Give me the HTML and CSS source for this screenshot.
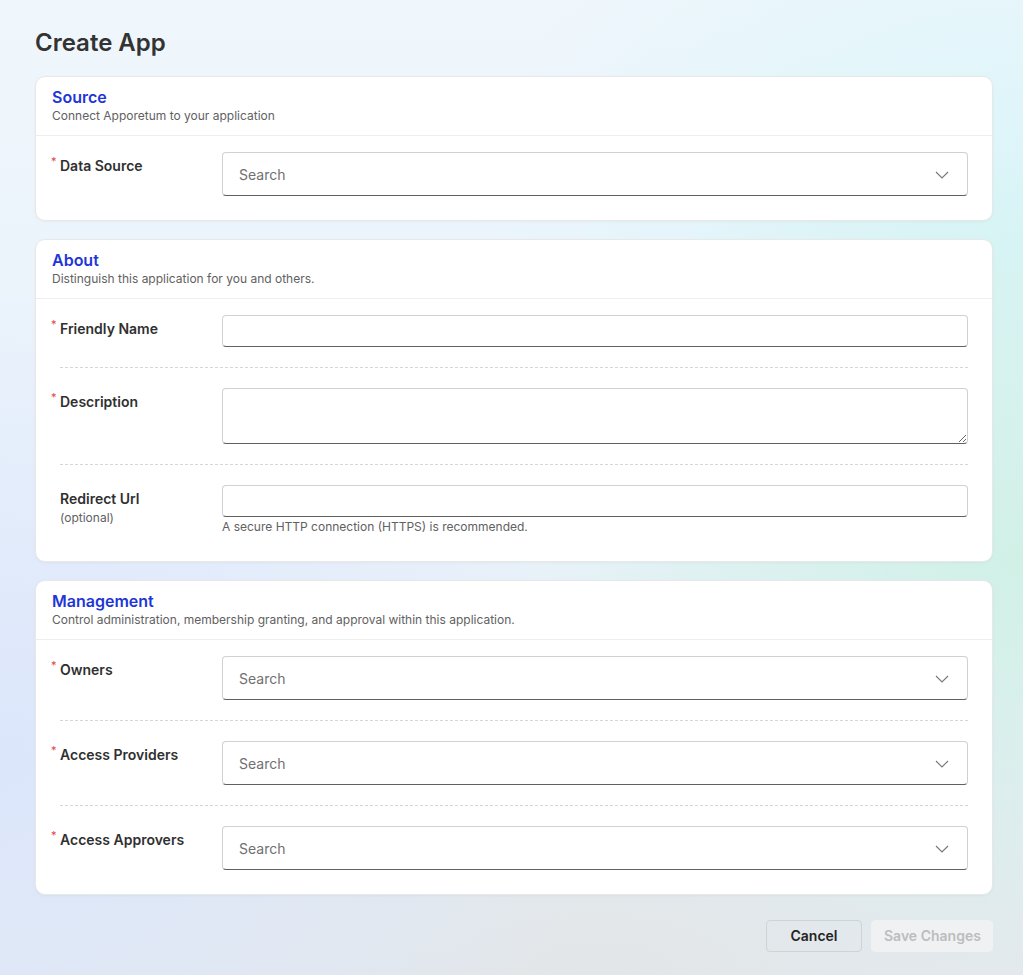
FILE: index.html
```html
<!DOCTYPE html>
<html lang="en">
<head>
<meta charset="utf-8">
<title>Create App</title>
<link rel="stylesheet" href="styles.css">
</head>
<body>
<div class="page">
  <h1 class="page-title">Create App</h1>

  <section class="card">
    <header class="card-head">
      <h2 class="card-title">Source</h2>
      <p class="card-sub">Connect Apporetum to your application</p>
    </header>
    <div class="card-body">
      <div class="row">
        <div class="label req">Data Source</div>
        <div class="field">
          <div class="select"><span class="placeholder">Search</span>
            <svg class="chev" width="14" height="8" viewBox="0 0 14 8"><path d="M1 1l6 6 6-6" fill="none" stroke="#7a7a7a" stroke-width="1.2"/></svg>
          </div>
        </div>
      </div>
    </div>
  </section>

  <section class="card">
    <header class="card-head">
      <h2 class="card-title">About</h2>
      <p class="card-sub">Distinguish this application for you and others.</p>
    </header>
    <div class="card-body">
      <div class="row">
        <div class="label req">Friendly Name</div>
        <div class="field"><input class="input" type="text"></div>
      </div>
      <div class="row">
        <div class="label req">Description</div>
        <div class="field"><textarea class="textarea"></textarea></div>
      </div>
      <div class="row">
        <div class="label">Redirect Url<span class="opt">(optional)</span></div>
        <div class="field">
          <input class="input" type="text">
          <div class="hint">A secure HTTP connection (HTTPS) is recommended.</div>
        </div>
      </div>
    </div>
  </section>

  <section class="card">
    <header class="card-head">
      <h2 class="card-title">Management</h2>
      <p class="card-sub">Control administration, membership granting, and approval within this application.</p>
    </header>
    <div class="card-body">
      <div class="row">
        <div class="label req">Owners</div>
        <div class="field">
          <div class="select"><span class="placeholder">Search</span>
            <svg class="chev" width="14" height="8" viewBox="0 0 14 8"><path d="M1 1l6 6 6-6" fill="none" stroke="#7a7a7a" stroke-width="1.2"/></svg>
          </div>
        </div>
      </div>
      <div class="row">
        <div class="label req">Access Providers</div>
        <div class="field">
          <div class="select"><span class="placeholder">Search</span>
            <svg class="chev" width="14" height="8" viewBox="0 0 14 8"><path d="M1 1l6 6 6-6" fill="none" stroke="#7a7a7a" stroke-width="1.2"/></svg>
          </div>
        </div>
      </div>
      <div class="row">
        <div class="label req">Access Approvers</div>
        <div class="field">
          <div class="select"><span class="placeholder">Search</span>
            <svg class="chev" width="14" height="8" viewBox="0 0 14 8"><path d="M1 1l6 6 6-6" fill="none" stroke="#7a7a7a" stroke-width="1.2"/></svg>
          </div>
        </div>
      </div>
    </div>
  </section>

  <div class="actions">
    <button class="btn btn-cancel" type="button">Cancel</button>
    <button class="btn btn-save" type="button" disabled>Save Changes</button>
  </div>
</div>
</body>
</html>
```

FILE: styles.css
```css
* { box-sizing: border-box; }

html, body {
  margin: 0;
  min-height: 100%;
}

body {
  font-family: Inter, "Noto Sans", Arial, sans-serif;
  color: #242424;
  min-height: 975px;
  background:
    radial-gradient(ellipse 520px 420px at 1023px 560px, rgba(206, 240, 228, 0.9), rgba(206, 240, 228, 0) 100%),
    radial-gradient(ellipse 560px 420px at 1023px 250px, rgba(214, 245, 248, 0.9), rgba(214, 245, 248, 0) 100%),
    radial-gradient(ellipse 600px 500px at 0px 760px, rgba(220, 230, 251, 1), rgba(220, 230, 251, 0) 100%),
    radial-gradient(ellipse 700px 300px at 600px 975px, rgba(226, 230, 232, 1), rgba(226, 230, 232, 0) 100%),
    linear-gradient(180deg, #eff6fc 0%, #eaf3fb 50%, #e4ebf2 100%);
}

.page {
  padding: 27px 30px 24px 35px;
}

.page-title {
  margin: 0 0 17px;
  font-size: 24px;
  line-height: 32px;
  font-weight: 600;
  color: #333333;
}

.card {
  background: #ffffff;
  border: 1px solid #e8e8e8;
  border-radius: 10px;
  box-shadow: 0 1px 3px rgba(0, 0, 0, 0.04);
  margin-bottom: 18px;
}

.card-head {
  padding: 10px 16px 10px;
  border-bottom: 1px solid #eeeeee;
}

.card-title {
  margin: 0;
  font-size: 16px;
  line-height: 20px;
  font-weight: 600;
  color: #1f36d6;
}

.card-sub {
  margin: 0;
  font-size: 12px;
  line-height: 18px;
  color: #616161;
}

.card-body {
  padding: 16px 24px 24px;
}

.row {
  display: grid;
  grid-template-columns: 162px 1fr;
  padding: 20px 0;
  border-bottom: 1px dashed #d6d6d6;
}

.row:first-child { padding-top: 0; }
.row:last-child { padding-bottom: 0; border-bottom: none; }

.label {
  position: relative;
  padding-top: 4px;
  font-size: 14px;
  line-height: 20px;
  font-weight: 600;
  color: #303030;
}

.label.req::before {
  content: "*";
  position: absolute;
  left: -9px;
  top: 2px;
  font-size: 11px;
  line-height: 14px;
  font-weight: 400;
  color: #e0474b;
}

.opt {
  display: block;
  font-size: 12px;
  line-height: 18px;
  font-weight: 400;
  color: #616161;
}

.field { min-width: 0; }

.select,
.input,
.textarea {
  display: flex;
  align-items: center;
  width: 100%;
  background: #ffffff;
  border: 1px solid #d1d1d1;
  border-bottom-color: #616161;
  border-radius: 4px;
  font-family: inherit;
  font-size: 14px;
  color: #242424;
}

.select {
  height: 44px;
  padding: 1px 18px 0 16px;
  justify-content: space-between;
}

.placeholder {
  color: #707070;
  font-size: 14px;
  line-height: 20px;
}

.chev { display: block; }

.input {
  height: 32px;
  padding: 0 10px;
}

.textarea {
  display: block;
  height: 56px;
  padding: 6px 10px;
  resize: vertical;
}

.hint {
  margin-top: 1px;
  margin-bottom: 1px;
  font-size: 12px;
  line-height: 18px;
  color: #616161;
}

.actions {
  display: flex;
  justify-content: flex-end;
  gap: 9px;
  padding-top: 7px;
}

.btn {
  height: 32px;
  padding: 0 12px;
  border-radius: 4px;
  font-family: inherit;
  font-size: 14px;
  font-weight: 600;
  line-height: 20px;
  white-space: nowrap;
}

.btn-cancel {
  width: 96px;
  background: transparent;
  border: 1px solid #cfd3d6;
  color: #242424;
}

.btn-save {
  width: 122px;
  background: #eff1f2;
  border: 1px solid #eff1f2;
  color: #bdbdbd;
}
```
